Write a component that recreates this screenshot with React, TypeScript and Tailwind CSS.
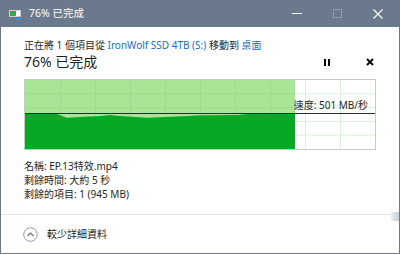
const font = { fontFamily: '"Noto Sans", "Noto Sans CJK TC", sans-serif' };

function TitleIcon() {
  return (
    <svg width="14" height="10" viewBox="0 0 14 10">
      <rect x="0.5" y="0.5" width="11" height="6" fill="#ffffff" stroke="#d0d0d0" />
      <rect x="1" y="1" width="6" height="5" fill="#22b14c" />
      <path d="M6 7.5h4V6l3 2.5L10 11V9.5H6z" fill="#2f8de4" />
    </svg>
  );
}

function SpeedGraph() {
  const cols = [36, 71, 106, 141, 176, 211, 246, 281, 316];
  const rows = [14.8, 28.6, 42.4, 56.2];
  const profile =
    "1,35 16,35 31,34.3 43,38.7 56,38 76,37 86,36 96,37 123,38.7 159,37.3 176,36.3 213,36 224,35 271,35 271,70 1,70";
  return (
    <svg width="352" height="71" viewBox="0 0 352 71" className="block">
      <rect x="0.5" y="0.5" width="351" height="70" fill="#ffffff" stroke="#c9c9c9" />
      {cols.map((x) => (
        <line key={x} x1={x + 0.5} y1="1" x2={x + 0.5} y2="70" stroke="#d9f2d9" />
      ))}
      {rows.map((y) => (
        <line key={y} x1="1" y1={y} x2="351" y2={y} stroke="#d9f2d9" />
      ))}
      <rect x="1" y="1" width="270" height="69" fill="#a9e596" />
      {cols
        .filter((x) => x < 271)
        .map((x) => (
          <line key={"g" + x} x1={x + 0.5} y1="1" x2={x + 0.5} y2="70" stroke="#9ddd88" />
        ))}
      {rows.map((y) => (
        <line key={"h" + y} x1="1" y1={y} x2="271" y2={y} stroke="#9ddd88" />
      ))}
      <polygon points={profile} fill="#06a824" />
      <line x1="1" y1="34.5" x2="351" y2="34.5" stroke="#2b2b2b" />
    </svg>
  );
}

export default function App() {
  return (
    <div
      className="w-[400px] h-[254px] bg-white border border-t-0 border-[#6b798d] flex flex-col overflow-hidden text-[#1f1f1f]"
      style={font}
    >
      <div className="h-[27px] bg-[#6b798d] flex items-center text-white shrink-0">
        <div className="pl-[8px] pr-[6px] pt-[2px]">
          <TitleIcon />
        </div>
        <span className="text-[10.5px] leading-none">76% 已完成</span>
        <div className="ml-auto flex items-center h-full">
          <div className="w-[41px] flex justify-center">
            <div className="w-[10px] h-px bg-white" />
          </div>
          <div className="w-[41px] flex justify-center">
            <div className="w-[9px] h-[9px] border border-[#8f9bab]" />
          </div>
          <div className="w-[41px] flex justify-center pr-[2px]">
            <svg width="10" height="10" viewBox="0 0 10 10">
              <path d="M0.5 0.5l9 9M9.5 0.5l-9 9" stroke="#ffffff" strokeWidth="1.1" />
            </svg>
          </div>
        </div>
      </div>

      <div className="px-[23px] flex-1 flex flex-col">
        <div className="pt-[11px] text-[10px] leading-[14px] whitespace-nowrap">
          正在將 1 個項目從 <span className="text-[#1a6bd0]">IronWolf SSD 4TB (S:)</span> 移動到{" "}
          <span className="text-[#1a6bd0]">桌面</span>
        </div>
        <div className="mt-px flex items-center h-[18px]">
          <span className="text-[14px] leading-[18px]">76% 已完成</span>
          <div className="ml-auto flex items-center">
            <div className="flex gap-[2px]">
              <div className="w-[2px] h-[7px] bg-black" />
              <div className="w-[2px] h-[7px] bg-black" />
            </div>
            <div className="ml-[36px] mr-[2px]">
              <svg width="8" height="8" viewBox="0 0 8 8">
                <path d="M1 1l6 6M7 1l-6 6" stroke="#000000" strokeWidth="1.8" />
              </svg>
            </div>
          </div>
        </div>

        <div className="relative mt-[8px]">
          <SpeedGraph />
          <span className="absolute right-[8px] top-[20px] text-[10px] leading-[12px] text-[#1f1f1f]">
            速度: 501 MB/秒
          </span>
        </div>

        <div className="mt-[9px] text-[10px] leading-[14px]">
          <div>名稱: EP.13特效.mp4</div>
          <div>剩餘時間: 大約 5 秒</div>
          <div>剩餘的項目: 1 (945 MB)</div>
        </div>
      </div>

      <div className="relative h-px bg-[#e5e5e5] mr-[8px] shrink-0">
        <div className="absolute -right-[8px] -top-[2px] w-[8px] h-[9px] bg-gradient-to-r from-[#eef0f3] to-[#c9ced6]" />
      </div>
      <div className="h-[38px] flex items-center pl-[22px] shrink-0">
        <svg width="15" height="15" viewBox="0 0 15 15">
          <circle cx="7.5" cy="7.5" r="6.8" fill="none" stroke="#9a9a9a" />
          <path d="M4.5 9l3-3 3 3" fill="none" stroke="#6a6a6a" strokeWidth="1.1" />
        </svg>
        <span className="ml-[9px] text-[10px] leading-none">較少詳細資料</span>
      </div>
    </div>
  );
}
